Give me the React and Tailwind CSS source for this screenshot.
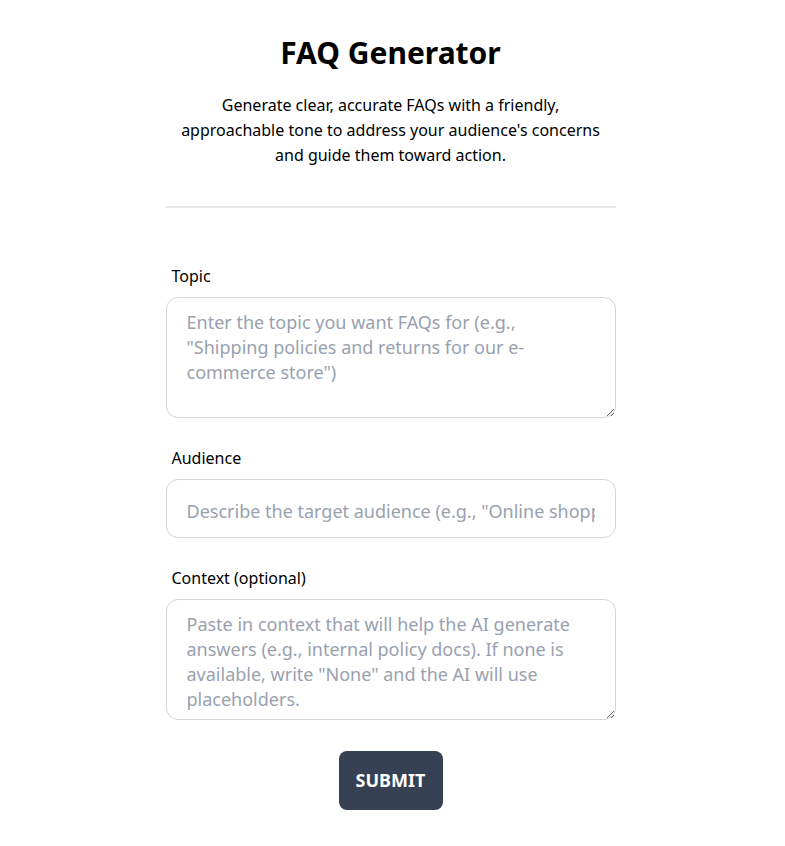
import React, { useState } from 'react'

const App = () => {
  const [topic, setTopic] = useState('')
  const [audience, setAudience] = useState('')
  const [context, setContext] = useState('')

  return (
    <div className="min-h-screen bg-white pr-1 text-black font-['Segoe_UI','Noto_Sans',sans-serif]">
      <div className="mx-auto w-[450px] pt-[34px] pb-8">
        <h1 className="text-center text-[30px] font-bold leading-[38px]">FAQ Generator</h1>
        <p className="mt-[21px] px-2 text-center text-[16px] leading-[25px]">
          Generate clear, accurate FAQs with a friendly, approachable tone to address your audience's concerns and guide them toward action.
        </p>
        <hr className="mt-[38px] border-t-2 border-gray-200" />

        <form className="mt-[56px]" onSubmit={(e) => e.preventDefault()}>
          <label className="block px-1.5 text-[16px] leading-6">Topic</label>
          <textarea
            value={topic}
            onChange={(e) => setTopic(e.target.value)}
            placeholder={'Enter the topic you want FAQs for (e.g., "Shipping policies and returns for our e-commerce store")'}
            className="mt-[9px] block h-[121px] w-full rounded-xl border border-gray-300 px-5 py-3 text-[18px] leading-[25px] placeholder:text-gray-400 outline-none"
          />

          <label className="mt-[28px] block px-1.5 text-[16px] leading-6">Audience</label>
          <input
            value={audience}
            onChange={(e) => setAudience(e.target.value)}
            placeholder={'Describe the target audience (e.g., "Online shoppers aged 25-40")'}
            className="mt-[9px] block h-[59px] w-full rounded-xl border border-gray-300 px-5 pt-1 text-[18px] placeholder:text-gray-400 outline-none"
          />

          <label className="mt-[28px] block px-1.5 text-[16px] leading-6">Context (optional)</label>
          <textarea
            value={context}
            onChange={(e) => setContext(e.target.value)}
            placeholder={'Paste in context that will help the AI generate answers (e.g., internal policy docs). If none is available, write "None" and the AI will use placeholders.'}
            className="mt-[9px] block h-[121px] w-full rounded-xl border border-gray-300 px-5 py-3 text-[18px] leading-[25px] placeholder:text-gray-400 outline-none"
          />

          <div className="mt-[31px] flex justify-center">
            <button type="submit" className="h-[59px] w-[104px] rounded-lg bg-gray-700 text-[18px] font-bold text-white">
              SUBMIT
            </button>
          </div>
        </form>
      </div>
    </div>
  )
}

export default App
